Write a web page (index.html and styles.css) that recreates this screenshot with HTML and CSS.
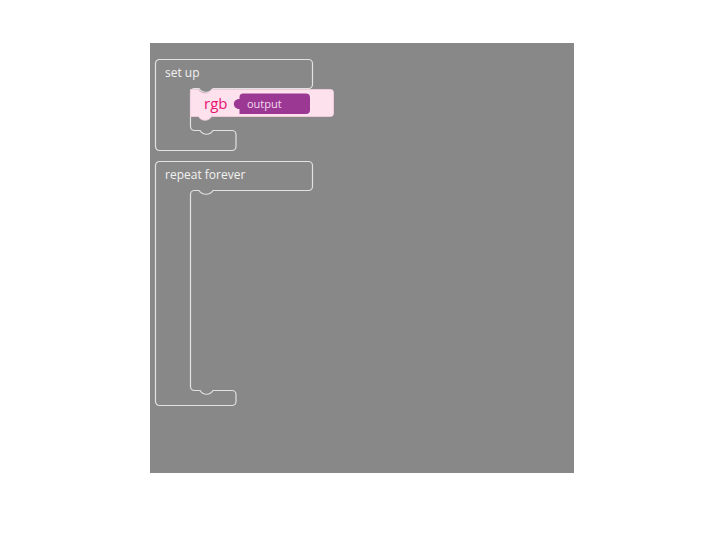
FILE: index.html
```html
<!DOCTYPE html>
<html>
<head>
<meta charset="utf-8">
<link rel="stylesheet" href="styles.css">
</head>
<body>
<div class="workspace">
  <svg class="canvas" width="424" height="430" viewBox="0 0 424 430" xmlns="http://www.w3.org/2000/svg">
    <!-- set up block -->
    <path class="block-outline" d="M 9.5 16.5 H 158.5 A 4 4 0 0 1 162.5 20.5 V 41.5 A 4 4 0 0 1 158.5 45.5 H 63 C 60 50.5, 52 50.5, 49 45.5 H 44.5 A 4 4 0 0 0 40.5 49.5 V 83.5 A 4 4 0 0 0 44.5 87.5 H 50 C 53 92.5, 60 92.5, 63 87.5 H 82 A 4 4 0 0 1 86 91.5 V 103.5 A 4 4 0 0 1 82 107.5 H 9.5 A 4 4 0 0 1 5.5 103.5 V 20.5 A 4 4 0 0 1 9.5 16.5 Z"/>
    <text class="block-label" x="15" y="34">set up</text>

    <!-- rgb block -->
    <path class="rgb-block" d="M 40.5 46.5 H 48.5 C 51 51.5, 59 51.5, 61.5 46.5 H 180.5 A 3 3 0 0 1 183.5 49.5 V 70.5 A 3 3 0 0 1 180.5 73.5 H 61.5 C 59 78.5, 51 78.5, 48.5 73.5 H 40.5 Z"/>
    <text class="rgb-label" x="54" y="65.5">rgb</text>
    <path class="output-block" d="M 93 50.5 H 156 A 4 4 0 0 1 160 54.5 V 67 A 4 4 0 0 1 156 71 H 89.5 V 66 C 82 66, 82 56, 89.5 56 V 54 A 3.5 3.5 0 0 1 93 50.5 Z"/>
    <text class="output-label" x="97" y="64.5">output</text>

    <!-- repeat forever block -->
    <path class="block-outline" d="M 9.5 118.5 H 158.5 A 4 4 0 0 1 162.5 122.5 V 143.5 A 4 4 0 0 1 158.5 147.5 H 63 C 60 152.5, 52 152.5, 49 147.5 H 44.5 A 4 4 0 0 0 40.5 151.5 V 343.5 A 4 4 0 0 0 44.5 347.5 H 50 C 53 352.5, 60 352.5, 63 347.5 H 82 A 4 4 0 0 1 86 351.5 V 358.5 A 4 4 0 0 1 82 362.5 H 9.5 A 4 4 0 0 1 5.5 358.5 V 122.5 A 4 4 0 0 1 9.5 118.5 Z"/>
    <text class="block-label" x="15" y="136">repeat forever</text>
  </svg>
</div>
</body>
</html>
```
FILE: styles.css
```css
html, body {
  margin: 0;
  padding: 0;
  background: #ffffff;
}

body {
  width: 720px;
  height: 540px;
  font-family: "Open Sans", "Noto Sans", sans-serif;
}

.workspace {
  margin-left: 150px;
  padding-top: 43px;
  width: 424px;
}

.canvas {
  display: block;
  width: 424px;
  height: 430px;
  background: #888888;
}

.block-outline {
  fill: none;
  stroke: #e2e2e2;
  stroke-width: 1.2;
}

.block-label {
  font-family: "Open Sans", "Noto Sans", sans-serif;
  font-size: 12px;
  fill: #f2f2f2;
}

.rgb-block {
  fill: #fde2ee;
  stroke: #f6cfe0;
  stroke-width: 0.8;
}

.rgb-label {
  font-family: "Open Sans", "Noto Sans", sans-serif;
  font-size: 15px;
  fill: #e8106e;
}

.output-block {
  fill: #9b3894;
}

.output-label {
  font-family: "Open Sans", "Noto Sans", sans-serif;
  font-size: 11px;
  fill: #f2dcef;
}
```
